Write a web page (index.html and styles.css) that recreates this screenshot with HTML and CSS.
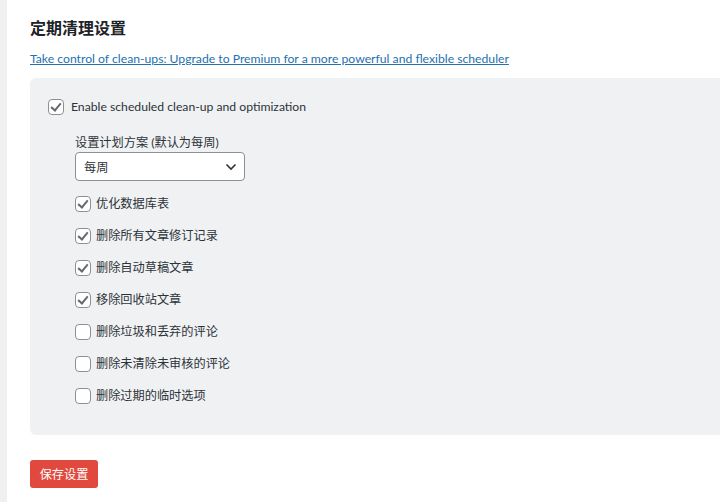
FILE: index.html
```html
<!DOCTYPE html>
<html lang="zh-CN">
<head>
    <meta charset="UTF-8">
    <meta name="viewport" content="width=device-width, initial-scale=1.0">
    <title>定期清理设置</title>
    <link rel="stylesheet" href="styles.css">
</head>
<body>
    <div class="page">
        <h2 class="title">定期清理设置</h2>
        <p class="promo"><a href="#">Take control of clean-ups: Upgrade to Premium for a more powerful and flexible scheduler</a></p>

        <div class="panel">
            <label class="check main-check">
                <input type="checkbox" checked>
                <span class="box"></span>
                <span>Enable scheduled clean-up and optimization</span>
            </label>

            <div class="schedule">
                <div class="field-label">设置计划方案 (默认为每周)</div>
                <div class="select">
                    <span>每周</span>
                    <svg width="12" height="8" viewBox="0 0 12 8"><path d="M1.5 1.5 6 6l4.5-4.5" fill="none" stroke="#2c3338" stroke-width="1.6"/></svg>
                </div>

                <div class="options">
                    <label class="check"><input type="checkbox" checked><span class="box"></span><span>优化数据库表</span></label>
                    <label class="check"><input type="checkbox" checked><span class="box"></span><span>删除所有文章修订记录</span></label>
                    <label class="check"><input type="checkbox" checked><span class="box"></span><span>删除自动草稿文章</span></label>
                    <label class="check"><input type="checkbox" checked><span class="box"></span><span>移除回收站文章</span></label>
                    <label class="check"><input type="checkbox"><span class="box"></span><span>删除垃圾和丢弃的评论</span></label>
                    <label class="check"><input type="checkbox"><span class="box"></span><span>删除未清除未审核的评论</span></label>
                    <label class="check"><input type="checkbox"><span class="box"></span><span>删除过期的临时选项</span></label>
                </div>
            </div>
        </div>

        <button class="save">保存设置</button>
    </div>
</body>
</html>
```

FILE: styles.css
```css
body {
    margin: 0;
    background: #fff;
    font-family: Lato, "Noto Sans CJK SC", sans-serif;
    font-size: 12.2px;
    color: #2c3338;
    border-left: 7px solid #f0f0f1;
    min-height: 502px;
    box-sizing: border-box;
}

.page {
    padding: 16px 0 0 23px;
}

.title {
    margin: 0;
    font-family: "Noto Sans CJK SC", sans-serif;
    font-size: 16px;
    line-height: 22px;
    font-weight: 700;
    color: #1d2327;
}

.promo {
    margin: 12px 0 0;
    height: 18px;
    line-height: 18px;
}

.promo a {
    color: #2271b1;
    text-decoration: underline;
}

.panel {
    margin-top: 10px;
    background: #f0f1f3;
    border-radius: 6px 0 0 6px;
    padding: 21px 0 31px 18px;
}

.check {
    display: flex;
    align-items: center;
    gap: 7px;
    height: 16px;
    line-height: 16px;
    cursor: pointer;
}

.check input {
    display: none;
}

.box {
    width: 14px;
    height: 14px;
    border: 1px solid #8c8f94;
    border-radius: 4px;
    background: #fff;
    flex: none;
    position: relative;
}

.check input:checked + .box::after {
    content: "";
    position: absolute;
    left: 4px;
    top: 1px;
    width: 4px;
    height: 8px;
    border: solid #646970;
    border-width: 0 2px 2px 0;
    transform: rotate(40deg);
}

.schedule {
    padding-left: 27px;
    margin-top: 19px;
}

.field-label {
    height: 18px;
    line-height: 18px;
}

.select {
    height: 27px;
    border: 1px solid #8c8f94;
    border-radius: 4px;
    background: #fff;
    display: flex;
    align-items: center;
    justify-content: space-between;
    padding: 0 7px 0 8px;
    width: 153px;
    color: #2c3338;
}

.options {
    display: flex;
    flex-direction: column;
    gap: 16px;
    margin-top: 15px;
}

.options .check {
    gap: 5px;
}

.save {
    display: block;
    margin-top: 25px;
    background: #e2493e;
    color: #fff;
    border: none;
    border-radius: 3px;
    height: 28px;
    width: 68px;
    padding: 0;
    font-family: "Noto Sans CJK SC", sans-serif;
    font-size: 12.2px;
}
```
